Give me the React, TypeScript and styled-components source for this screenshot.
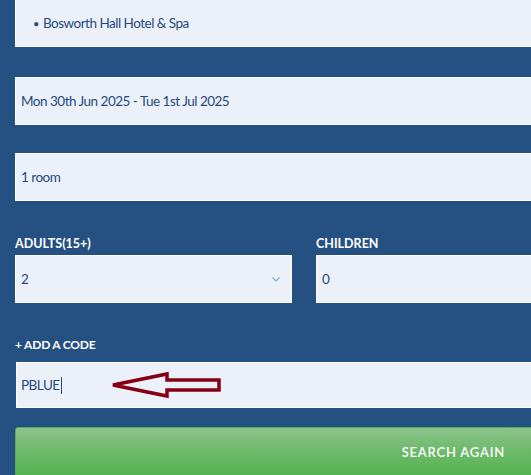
import React from "react";
import styled, { createGlobalStyle } from "styled-components";

const Global = createGlobalStyle`
  html, body { margin: 0; padding: 0; background: #255082; overflow: hidden; }
  body { font-family: Lato, "Open Sans", sans-serif; }
`;

const Page = styled.div`
  width: 531px;
  height: 475px;
  background: #255082;
  overflow: hidden;
`;

const Form = styled.div`
  width: 578px;
  margin-top: -1px;
  padding-left: 15px;
  display: flex;
  flex-direction: column;
`;

const Field = styled.div<{ $gap?: number; $indent?: number; $h?: number }>`
  box-sizing: border-box;
  height: ${(p) => p.$h ?? 48}px;
  margin-bottom: ${(p) => p.$gap ?? 0}px;
  margin-left: ${(p) => p.$indent ?? 0}px;
  background: #ecf0f8;
  border: 1px solid #ffffff;
  display: flex;
  align-items: center;
  padding-left: ${(p) => (p.$indent ? 4 : 5)}px;
  color: #1f4b80;
  font-size: 13.5px;
  letter-spacing: -0.5px;
  position: relative;
`;

const Bullet = styled.span`
  padding-left: 12px;
  margin-right: 4px;
  font-size: 11px;
`;

const Row = styled.div`
  display: grid;
  grid-template-columns: 277px 1fr;
  column-gap: 24px;
  margin-top: 35px;
`;

const Col = styled.div`
  display: flex;
  flex-direction: column;
`;

const Label = styled.div<{ $size?: number; $mb?: number; $ls?: number }>`
  color: #ffffff;
  font-weight: 700;
  font-size: ${(p) => p.$size ?? 12.5}px;
  letter-spacing: ${(p) => p.$ls ?? 0}px;
  line-height: 16px;
  margin-bottom: ${(p) => p.$mb ?? 3}px;
`;

const Chevron = styled.svg`
  position: absolute;
  right: 11px;
  top: 50%;
  margin-top: -2px;
`;

const CodeBlock = styled.div`
  margin-top: 34px;
  display: flex;
  flex-direction: column;
  position: relative;
`;

const Caret = styled.span`
  display: inline-block;
  width: 1px;
  height: 17px;
  background: #1f4b80;
  margin-left: 1px;
`;

const Arrow = styled.svg`
  position: absolute;
  left: 96px;
  top: 34px;
`;

const Button = styled.button`
  box-sizing: border-box;
  margin-top: 19px;
  height: 50px;
  border: 1px solid #5aa958;
  border-radius: 3px;
  background: linear-gradient(to bottom, #8cc38b 0%, #6cb969 50%, #55b351 100%);
  color: #ffffff;
  font-family: Lato, "Open Sans", sans-serif;
  font-size: 13px;
  font-weight: 600;
  letter-spacing: 0.8px;
  display: flex;
  align-items: center;
  justify-content: flex-end;
  padding: 0 87px 0 0;
`;

export default function App() {
  return (
    <Page>
      <Global />
      <Form>
        <Field $gap={30}>
          <Bullet>•</Bullet>Bosworth Hall Hotel &amp; Spa
        </Field>
        <Field $gap={28}>Mon 30th Jun 2025 - Tue 1st Jul 2025</Field>
        <Field>1 room</Field>
        <Row>
          <Col>
            <Label>ADULTS(15+)</Label>
            <Field>
              2
              <Chevron width="8" height="5" viewBox="0 0 8 5">
                <path d="M0.5 0.5 L4 4 L7.5 0.5" fill="none" stroke="#8fa8d6" strokeWidth="1.2" />
              </Chevron>
            </Field>
          </Col>
          <Col>
            <Label>CHILDREN</Label>
            <Field>0</Field>
          </Col>
        </Row>
        <CodeBlock>
          <Label $size={12} $ls={-0.2} $mb={9}>+ ADD A CODE</Label>
          <Field $indent={1} $h={46}>
            PBLUE
            <Caret />
          </Field>
          <Arrow width="112" height="28" viewBox="0 0 112 28">
            <polygon
              points="2,14 56,3 56,9 108,9 108,19 56,19 56,25"
              fill="none"
              stroke="#850014"
              strokeWidth="3.5"
              strokeLinejoin="miter"
            />
          </Arrow>
        </CodeBlock>
        <Button>SEARCH AGAIN</Button>
      </Form>
    </Page>
  );
}
